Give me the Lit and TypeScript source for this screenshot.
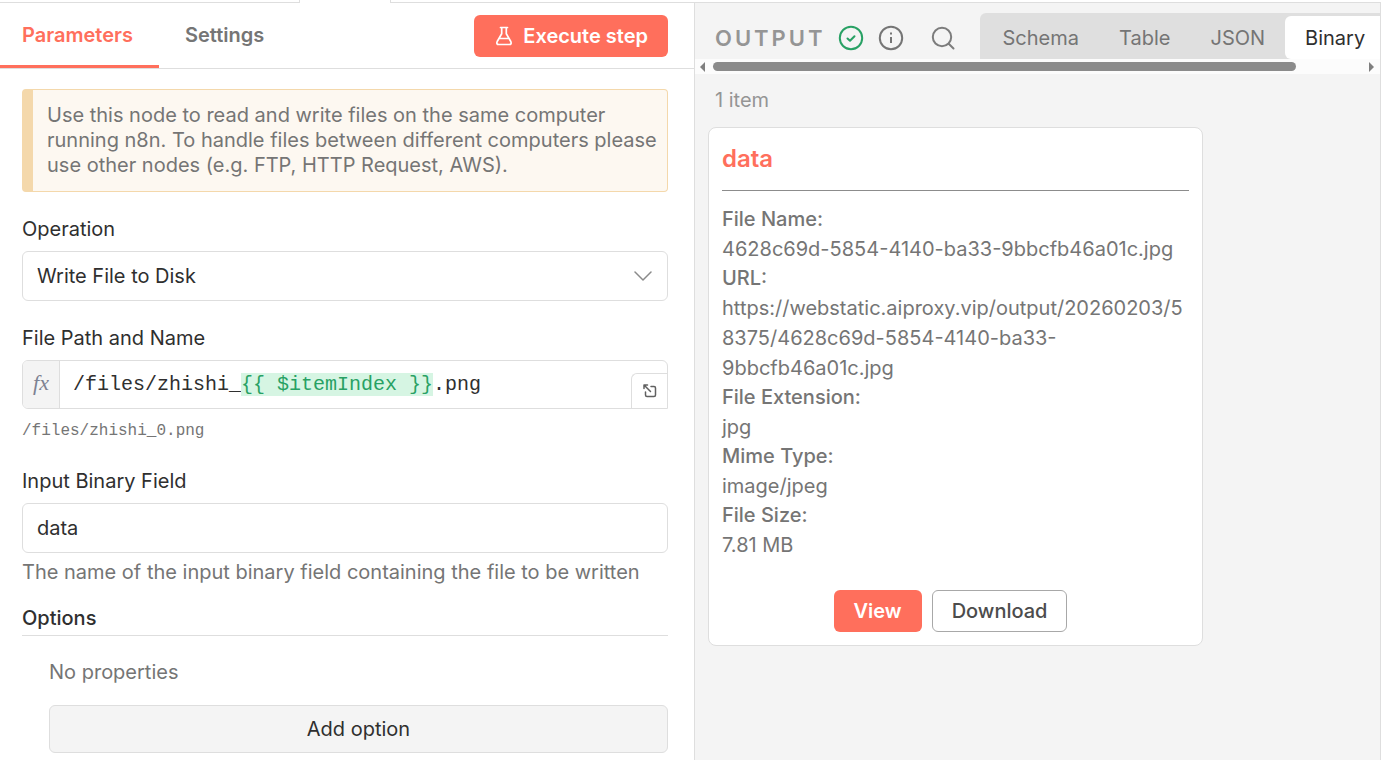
import { LitElement, html, css } from "lit";
import { customElement, property, state } from "lit/decorators.js";
import { classMap } from "lit/directives/class-map.js";

const shared = css`
  * {
    box-sizing: border-box;
  }
  button,
  input,
  select {
    font: inherit;
    color: inherit;
    margin: 0;
  }
  button {
    cursor: pointer;
  }
  .primary {
    background: #ff6f5c;
    color: #fff;
    border: 0;
    border-radius: 6px;
    height: 42px;
    padding: 0 20px;
    font-weight: 600;
    display: inline-flex;
    align-items: center;
    gap: 9px;
  }
`;

@customElement("parameters-panel")
class ParametersPanel extends LitElement {
  static styles = [
    shared,
    css`
      :host {
        display: block;
        background: #fff;
        border-right: 1px solid #dedede;
        min-width: 0;
      }
      .header {
        display: flex;
        height: 66px;
        border-bottom: 1px solid #dedede;
        padding-right: 26px;
        align-items: flex-start;
      }
      .tab {
        height: 65px;
        padding: 0 26px;
        border-bottom: 3px solid transparent;
        color: #757575;
        font-weight: 600;
        text-decoration: none;
        line-height: 64px;
      }
      .tab.active {
        color: #ff6f5c;
        border-bottom-color: #ff6f5c;
        padding-left: 22px;
      }
      .execute {
        margin: 12px 0 0 auto;
      }
      .body {
        padding: 20px 26px 0 22px;
      }
      .callout {
        margin: 0 0 24px;
        border: 1px solid #f4d8ab;
        border-left-width: 11px;
        border-radius: 4px;
        background: #fdf8f1;
        color: #757575;
        padding: 13px 6px 13px 14px;
        line-height: 25px;
      }
      .field {
        margin-bottom: 24px;
      }
      .field.last {
        margin-bottom: 20px;
      }
      .label {
        display: block;
        margin-bottom: 9px;
      }
      .control {
        display: block;
        width: 100%;
        height: 50px;
        border: 1px solid #dedede;
        border-radius: 6px;
        background: #fff;
        padding: 0 14px;
        outline: 0;
      }
      .pick {
        display: grid;
        align-items: center;
      }
      .pick > * {
        grid-area: 1 / 1;
      }
      .pick select {
        appearance: none;
      }
      .chevron {
        justify-self: end;
        margin-right: 16px;
        pointer-events: none;
      }
      .editor {
        display: flex;
        height: 49px;
        border: 1px solid #dedede;
        border-radius: 6px 6px 0 6px;
        overflow: hidden;
      }
      .fx {
        width: 37px;
        border-right: 1px solid #dedede;
        background: #f4f4f4;
        color: #7d8292;
        text-align: center;
        font: italic 22px/44px "Liberation Serif", serif;
      }
      .code {
        flex: 1;
        padding: 0 13px;
        font: 20px/48px "Liberation Mono", monospace;
        white-space: pre;
        outline: 0;
      }
      .expr {
        background: #d6f5e3;
        color: #28a164;
      }
      .expand {
        align-self: flex-end;
        width: 36px;
        height: 35px;
        padding: 0;
        border: solid #dedede;
        border-width: 1px 0 0 1px;
        border-radius: 6px 0 0 0;
        background: #fff;
        display: grid;
        place-items: center;
      }
      .hint {
        margin: 6px 0 0;
        color: #757575;
      }
      .hint.mono {
        margin-top: 9px;
        font-family: "Liberation Mono", monospace;
        font-size: 16px;
      }
      .options {
        margin: 0;
        padding-bottom: 4px;
        border-bottom: 1px solid #dedede;
        font-size: 20px;
        font-weight: 500;
      }
      .none {
        margin: 0 0 20px;
        color: #757575;
      }
      .group {
        padding: 23px 0 7px 27px;
      }
      .add {
        width: 100%;
        height: 48px;
        border: 1px solid #dedede;
        border-radius: 6px;
        background: #f4f4f4;
      }
    `,
  ];

  render() {
    return html`
      <nav class="header">
        <a class="tab active" href="#parameters">Parameters</a>
        <a class="tab" href="#settings">Settings</a>
        <button class="primary execute">
          <svg width="20" height="22" viewBox="0 0 20 22" fill="none" stroke="currentColor" stroke-width="1.7" stroke-linecap="round" stroke-linejoin="round">
            <path d="M6.500 2.500h7M7.700 2.500v6.300L3.200 16.500Q2 19.500 4.800 19.500h10.400Q18 19.500 16.800 16.500L12.300 8.800V2.500M5.500 13.500h9" />
          </svg>
          Execute step
        </button>
      </nav>
      <div class="body">
        <p class="callout">
          Use this node to read and write files on the same computer running
          n8n. To handle files between different computers please use other
          nodes (e.g. FTP, HTTP Request, AWS).
        </p>
        <div class="field">
          <label class="label" for="operation">Operation</label>
          <div class="pick">
            <select class="control" id="operation">
              <option>Write File to Disk</option>
            </select>
            <svg class="chevron" width="18" height="10" viewBox="0 0 18 10" fill="none" stroke="#8a8a8a" stroke-width="1.5" stroke-linecap="round" stroke-linejoin="round">
              <path d="M1 1l8 8 8-8" />
            </svg>
          </div>
        </div>
        <div class="field">
          <span class="label" id="path-label">File Path and Name</span>
          <div class="editor">
            <span class="fx">fx</span>
            <div class="code" role="textbox" contenteditable="true" spellcheck="false" aria-labelledby="path-label">/files/zhishi_<span class="expr">{{ $itemIndex }}</span>.png</div>
            <button class="expand" aria-label="Open expression editor">
              <svg width="16" height="16" viewBox="0 0 16 16" fill="none" stroke="#606060" stroke-width="1.5" stroke-linecap="round" stroke-linejoin="round">
                <path d="M2 5.500V2h3.500M2 2l6.500 6.500M9 3.500h3q1.500 0 1.500 1.500v7q0 1.500-1.500 1.500H5q-1.500 0-1.500-1.500V9" />
              </svg>
            </button>
          </div>
          <p class="hint mono">/files/zhishi_0.png</p>
        </div>
        <div class="field last">
          <label class="label" for="binary-field">Input Binary Field</label>
          <input class="control" id="binary-field" .value=${"data"} />
          <p class="hint">The name of the input binary field containing the file to be written</p>
        </div>
        <h2 class="options">Options</h2>
        <div class="group">
          <p class="none">No properties</p>
          <button class="add">Add option</button>
        </div>
      </div>
    `;
  }
}

@customElement("output-panel")
class OutputPanel extends LitElement {
  @property({ attribute: false }) file: [string, string][] = [
    ["File Name:", "4628c69d-5854-4140-ba33-9bbcfb46a01c.jpg"],
    ["URL:", "https://webstatic.aiproxy.vip/output/20260203/58375/4628c69d-5854-4140-ba33-9bbcfb46a01c.jpg"],
    ["File Extension:", "jpg"],
    ["Mime Type:", "image/jpeg"],
    ["File Size:", "7.81 MB"],
  ];
  @state() view = "Binary";

  static styles = [
    shared,
    css`
      :host {
        display: block;
        min-width: 0;
        background: #f4f4f4;
        border-right: 1px solid #dedede;
        color: #757575;
      }
      .header {
        display: flex;
        height: 56px;
        padding-left: 20px;
        overflow: hidden;
      }
      .header > * {
        flex: none;
      }
      .title {
        margin: 0;
        font-size: 22px;
        font-weight: 600;
        letter-spacing: 3px;
        line-height: 70px;
        color: #959595;
      }
      .status {
        display: flex;
        gap: 14px;
        align-items: center;
        height: 70px;
        margin-left: 12px;
      }
      .search {
        width: 26px;
        height: 26px;
        padding: 0;
        margin-left: 12px;
        border: 0;
        background: none;
      }
      svg {
        display: block;
      }
      .views {
        display: flex;
        margin: 10px 0 0 24px;
        padding: 3px 3px 0;
        background: #dfdfdf;
        border-radius: 6px 6px 0 0;
      }
      .view {
        border: 0;
        background: none;
        border-radius: 6px;
        padding: 0 20px;
        height: 43px;
      }
      .view.active {
        background: #fff;
        color: #2f2f2f;
      }
      .scroll {
        height: 15px;
        background: #fcfcfc;
        display: flex;
        align-items: center;
        gap: 8px;
        padding: 0 6px 0 5px;
      }
      .track {
        flex: 1;
      }
      .thumb {
        width: 90%;
        height: 9px;
        border-radius: 5px;
        background: #8b8b8b;
      }
      .count {
        margin: 0;
        padding: 13px 20px 14px;
        color: #959595;
      }
      .card {
        width: 495px;
        max-width: calc(100% - 26px);
        margin-left: 13px;
        padding: 12px 13px 13px;
        background: #fff;
        border: 1px solid #dedede;
        border-radius: 8px;
      }
      .name {
        margin: 0 0 14px;
        padding-bottom: 12px;
        border-bottom: 1px solid #8c8c8c;
        color: #ff6f5c;
        font-size: 24px;
        font-weight: 600;
        line-height: 38px;
      }
      .facts {
        margin: 0;
      }
      .facts dt {
        font-weight: 500;
        line-height: 29px;
      }
      .facts dd {
        margin: 0;
        line-height: 30px;
        overflow-wrap: anywhere;
      }
      .actions {
        display: flex;
        justify-content: center;
        gap: 10px;
        margin-top: 30px;
        padding-right: 10px;
      }
      .secondary {
        height: 42px;
        padding: 0 19px;
        border: 1px solid #a8a8a8;
        border-radius: 6px;
        background: #fff;
        color: #4c4c4c;
        font-weight: 500;
      }
    `,
  ];

  render() {
    return html`
      <header class="header">
        <h2 class="title">OUTPUT</h2>
        <div class="status">
          <svg width="26" height="26" viewBox="0 0 26 26" fill="none" stroke="#28a164" stroke-width="2" stroke-linecap="round" stroke-linejoin="round">
            <circle cx="13" cy="13" r="11.200" />
            <path d="M9.500 13.500l2.500 2.300 4.500-4.600" />
          </svg>
          <svg width="26" height="26" viewBox="0 0 26 26" fill="none" stroke="#757575" stroke-width="2">
            <circle cx="13" cy="13" r="11.200" />
            <path d="M13 12v6M13 7.500v2" />
          </svg>
          <button class="search" aria-label="Search output">
            <svg width="26" height="26" viewBox="0 0 26 26" fill="none" stroke="#7c7c7c" stroke-width="2" stroke-linecap="round">
              <circle cx="12" cy="12" r="9.200" />
              <path d="M18.700 18.700l4.800 4.800" />
            </svg>
          </button>
        </div>
        <div class="views">
          ${["Schema", "Table", "JSON", "Binary"].map(
            (v) => html`<button
              class=${classMap({ view: true, active: v === this.view })}
              @click=${() => (this.view = v)}
            >${v}</button>`,
          )}
        </div>
      </header>
      <div class="scroll" aria-hidden="true">
        <svg width="5" height="10" viewBox="0 0 5 10"><path d="M5 0v10L0 5z" fill="#7f7f7f" /></svg>
        <div class="track"><div class="thumb"></div></div>
        <svg width="5" height="10" viewBox="0 0 5 10"><path d="M0 0v10l5-5z" fill="#7f7f7f" /></svg>
      </div>
      <p class="count">1 item</p>
      <section class="card">
        <h3 class="name">data</h3>
        <dl class="facts">
          ${this.file.map(([k, v]) => html`<dt>${k}</dt><dd>${v}</dd>`)}
        </dl>
        <div class="actions">
          <button class="primary">View</button>
          <button class="secondary">Download</button>
        </div>
      </section>
    `;
  }
}

@customElement("app-root")
class AppRoot extends LitElement {
  static styles = css`
    :host {
      display: flex;
      flex-direction: column;
      min-height: 100vh;
      background: #fff;
      color: #2f2f2f;
      font: 20px/26px Inter, sans-serif;
    }
    .edge {
      display: flex;
      gap: 90px;
      height: 3px;
    }
    .line {
      border-bottom: 1px solid #dedede;
      flex: 1;
    }
    .line.start {
      flex: none;
      width: 299px;
      border-right: 1px solid #dedede;
    }
    .line.end {
      border-left: 1px solid #dedede;
    }
    .panels {
      flex: 1;
      display: grid;
      grid-template-columns: minmax(0, 695fr) minmax(0, 686fr);
    }
  `;

  render() {
    return html`
      <div class="edge">
        <div class="line start"></div>
        <div class="line end"></div>
      </div>
      <main class="panels">
        <parameters-panel></parameters-panel>
        <output-panel></output-panel>
      </main>
    `;
  }
}
